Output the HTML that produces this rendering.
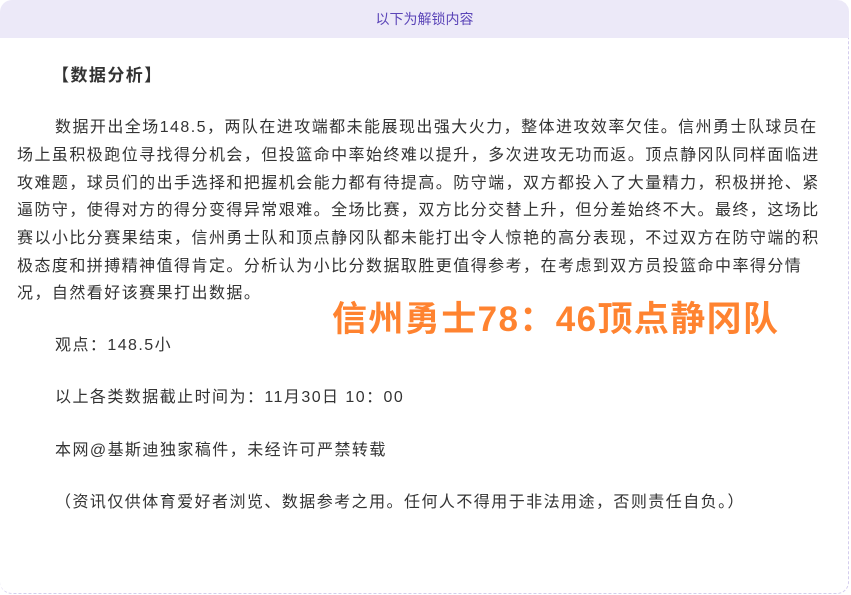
<!DOCTYPE html>
<html><head><meta charset="utf-8"><style>
body{margin:0;width:851px;height:595px;background:#fff;font-family:"Liberation Sans","Noto Sans CJK SC",sans-serif;overflow:hidden;position:relative}
.box{position:absolute;left:0;top:0;width:848px;height:593px;border:1px dashed #d4cdee;border-left:none;border-top:none;border-radius:0 12px 12px 12px}
.hd{position:absolute;left:0;top:0;width:849px;height:38px;background:#ece9f8;border-radius:12px 12px 0 0;color:#5b45b8;font-size:14px;text-align:center;line-height:38px}
.t{position:absolute;white-space:nowrap;font-size:16px;color:#333;line-height:20px;letter-spacing:1.45px}
.b{font-weight:bold;font-size:17px}
.o{position:absolute;left:332px;top:299px;font-size:35px;font-weight:bold;color:#ff8330;white-space:nowrap;line-height:42px;letter-spacing:1.4px}
</style></head><body>
<div class="box"></div>
<div class="hd">以下为解锁内容</div>
<div class="t b" style="left:52px;top:66px">【数据分析】</div>
<div class="t" style="left:55px;top:118px">数据开出全场148.5，两队在进攻端都未能展现出强大火力，整体进攻效率欠佳。信州勇士队球员在</div>
<div class="t" style="left:17px;top:146px">场上虽积极跑位寻找得分机会，但投篮命中率始终难以提升，多次进攻无功而返。顶点静冈队同样面临进</div>
<div class="t" style="left:17px;top:174px">攻难题，球员们的出手选择和把握机会能力都有待提高。防守端，双方都投入了大量精力，积极拼抢、紧</div>
<div class="t" style="left:17px;top:201px">逼防守，使得对方的得分变得异常艰难。全场比赛，双方比分交替上升，但分差始终不大。最终，这场比</div>
<div class="t" style="left:17px;top:229px">赛以小比分赛果结束，信州勇士队和顶点静冈队都未能打出令人惊艳的高分表现，不过双方在防守端的积</div>
<div class="t" style="left:17px;top:257px">极态度和拼搏精神值得肯定。分析认为小比分数据取胜更值得参考，在考虑到双方员投篮命中率得分情</div>
<div class="t" style="left:17px;top:284px">况，自然看好该赛果打出数据。</div>
<div class="o">信州勇士78：46顶点静冈队</div>
<div class="t" style="left:55px;top:336px">观点：148.5小</div>
<div class="t" style="left:55px;top:388px">以上各类数据截止时间为：11月30日 10：00</div>
<div class="t" style="left:55px;top:441px">本网@基斯迪独家稿件，未经许可严禁转载</div>
<div class="t" style="left:55px;top:493px">（资讯仅供体育爱好者浏览、数据参考之用。任何人不得用于非法用途，否则责任自负。）</div>
</body></html>
